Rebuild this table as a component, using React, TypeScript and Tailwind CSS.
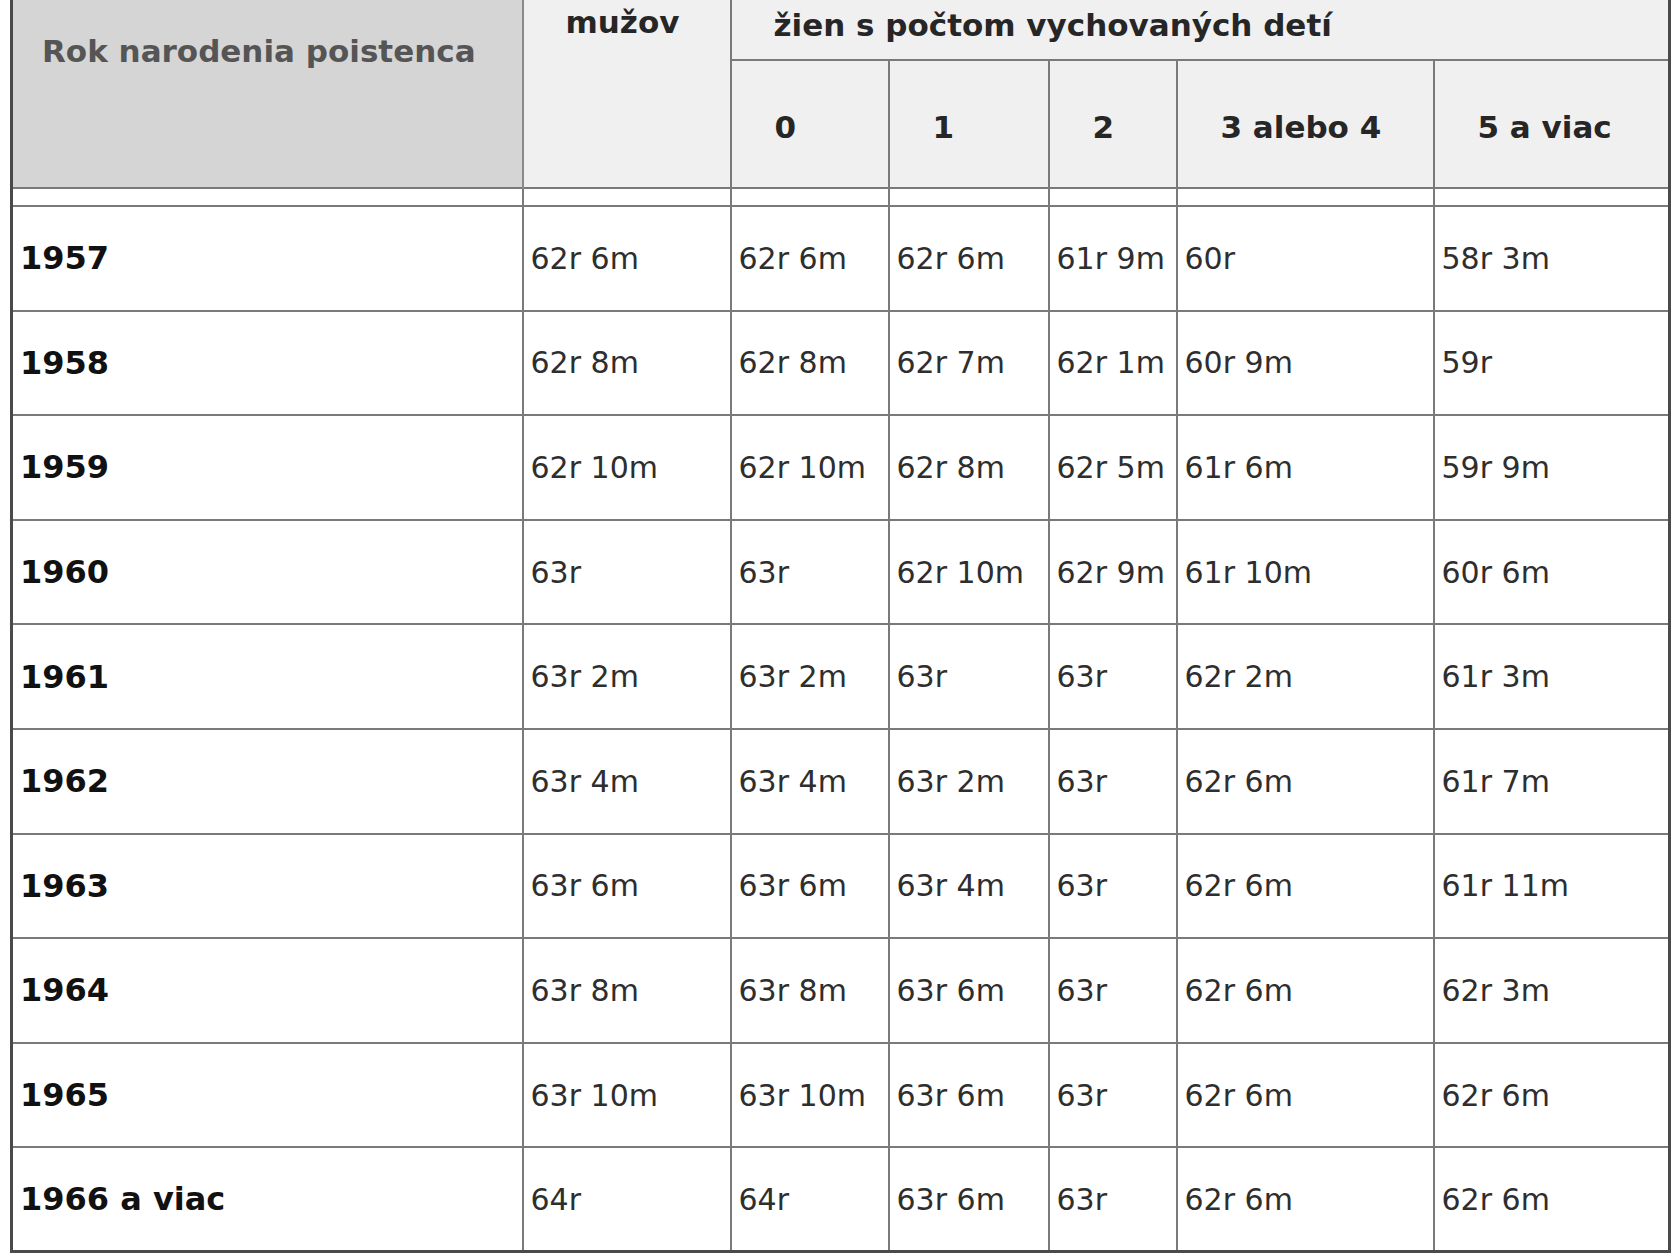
import { FC } from 'react';

const ROWS = [
  { year: '1957', cells: ['62r 6m', '62r 6m', '62r 6m', '61r 9m', '60r', '58r 3m'] },
  { year: '1958', cells: ['62r 8m', '62r 8m', '62r 7m', '62r 1m', '60r 9m', '59r'] },
  { year: '1959', cells: ['62r 10m', '62r 10m', '62r 8m', '62r 5m', '61r 6m', '59r 9m'] },
  { year: '1960', cells: ['63r', '63r', '62r 10m', '62r 9m', '61r 10m', '60r 6m'] },
  { year: '1961', cells: ['63r 2m', '63r 2m', '63r', '63r', '62r 2m', '61r 3m'] },
  { year: '1962', cells: ['63r 4m', '63r 4m', '63r 2m', '63r', '62r 6m', '61r 7m'] },
  { year: '1963', cells: ['63r 6m', '63r 6m', '63r 4m', '63r', '62r 6m', '61r 11m'] },
  { year: '1964', cells: ['63r 8m', '63r 8m', '63r 6m', '63r', '62r 6m', '62r 3m'] },
  { year: '1965', cells: ['63r 10m', '63r 10m', '63r 6m', '63r', '62r 6m', '62r 6m'] },
  { year: '1966 a viac', cells: ['64r', '64r', '63r 6m', '63r', '62r 6m', '62r 6m'] },
];

const KIDS = ['0', '1', '2', '3 alebo 4', '5 a viac'];

const font = { fontFamily: '"DejaVu Sans", Verdana, sans-serif' };

const App: FC = () => (
  <div className="min-h-[1260px] bg-white pl-[10px]" style={font}>
    <table className="table-fixed border-collapse w-[1658px] border-x-[3px] border-b-[3px] border-[#4a4a4a]">
      <colgroup>
        <col className="w-[511px]" />
        <col className="w-[208px]" />
        <col className="w-[158px]" />
        <col className="w-[160px]" />
        <col className="w-[128px]" />
        <col className="w-[257px]" />
        <col className="w-[236px]" />
      </colgroup>
      <thead>
        <tr className="h-[60px]">
          <th
            rowSpan={2}
            className="bg-[#d5d5d5] border-r-2 border-[#8a8a8a] align-top text-left pl-[29px] pt-[32px] text-[31px] font-bold text-[#555] leading-[38px]"
          >
            Rok narodenia poistenca
          </th>
          <th
            rowSpan={2}
            className="bg-[#f0f0f0] border-x-2 border-[#7a7a7a] align-top text-left pl-[42px] pt-[3px] text-[31px] font-bold text-[#262626] leading-[38px]"
          >
            mužov
          </th>
          <th
            colSpan={5}
            className="bg-[#f0f0f0] border-b-2 border-l-2 border-[#7a7a7a] text-left pl-[42px] pb-[10px] text-[31px] font-bold text-[#262626] leading-[38px]"
          >
            žien s počtom vychovaných detí
          </th>
        </tr>
        <tr className="h-[128px]">
          {KIDS.map((k) => (
            <th
              key={k}
              className="bg-[#f0f0f0] border-x-2 border-[#7a7a7a] text-left pl-[43px] pt-[6px] text-[31px] font-bold text-[#262626]"
            >
              {k}
            </th>
          ))}
        </tr>
        <tr className="h-[18px]">
          {Array.from({ length: 7 }).map((_, i) => (
            <td key={i} className="border-2 border-[#7a7a7a] bg-white p-0" />
          ))}
        </tr>
      </thead>
      <tbody>
        {ROWS.map((r) => (
          <tr key={r.year} className="h-[104.6px]">
            <td className="border-2 border-[#7a7a7a] pl-[7px] text-[32px] font-bold text-[#111]">{r.year}</td>
            {r.cells.map((c, i) => (
              <td key={i} className="border-2 border-[#7a7a7a] pl-[7px] text-[30px] text-[#2e2e2e] whitespace-nowrap">
                {c}
              </td>
            ))}
          </tr>
        ))}
      </tbody>
    </table>
  </div>
);

export default App;
